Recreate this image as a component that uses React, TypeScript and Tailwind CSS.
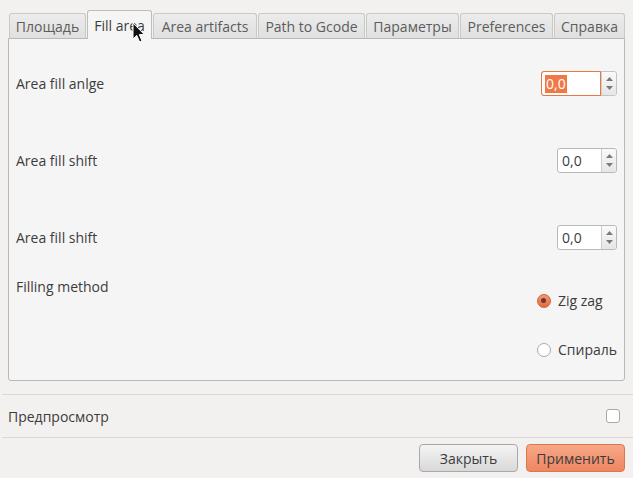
import * as React from "react"

const TABS = [
  { label: "Площадь", w: "w-[77px]" },
  { label: "Fill area", w: "w-[65px]", active: true },
  { label: "Area artifacts", w: "w-[104px]" },
  { label: "Path to Gcode", w: "w-[107px]" },
  { label: "Параметры", w: "w-[93px]" },
  { label: "Preferences", w: "w-[93px]" },
  { label: "Справка", w: "w-[71px]" },
]

function SpinArrows() {
  return (
    <div className="flex w-[15px] flex-col items-center justify-center gap-[5px] rounded-r-[3px] border-l border-[#cfcfcf] bg-gradient-to-b from-[#fafafa] to-[#e6e6e6]">
      <svg width="7" height="4" viewBox="0 0 7 4">
        <path d="M0 4 L3.5 0 L7 4 Z" fill="#7a7a7a" />
      </svg>
      <svg width="7" height="4" viewBox="0 0 7 4">
        <path d="M0 0 L3.5 4 L7 0 Z" fill="#7a7a7a" />
      </svg>
    </div>
  )
}

function SpinBox({ focused }: { focused?: boolean }) {
  if (focused) {
    return (
      <div className="flex h-[25px] w-[76px] rounded-[3px] border border-[#c4c4c4] bg-white">
        <div className="-my-px -ml-px flex flex-1 items-center rounded-l-[3px] border border-[#e9773f] pl-[3px]">
          <span className="bg-[#f07746] px-px leading-[18px] text-white">0,0</span>
        </div>
        <SpinArrows />
      </div>
    )
  }
  return (
    <div className="flex h-[25px] w-[60px] rounded-[3px] border border-[#b9b9b9] bg-white">
      <div className="flex flex-1 items-center pl-[4px]">0,0</div>
      <SpinArrows />
    </div>
  )
}

function Radio({ checked, label }: { checked?: boolean; label: string }) {
  return (
    <div className="flex items-center gap-[7px]">
      {checked ? (
        <span className="flex h-[14px] w-[14px] items-center justify-center rounded-full border border-[#c9633c] bg-gradient-to-b from-[#f39a76] to-[#e4683b]">
          <span className="h-[5px] w-[5px] rounded-full bg-[#6b3a28]" />
        </span>
      ) : (
        <span className="h-[14px] w-[14px] rounded-full border border-[#a9a9a9] bg-white" />
      )}
      <span>{label}</span>
    </div>
  )
}

function Cursor() {
  return (
    <svg
      className="pointer-events-none absolute left-[132px] top-[22px] z-20"
      width="14"
      height="22"
      viewBox="0 0 14 22"
    >
      <path
        d="M1 1 L1 17 L4.8 13.4 L7.6 20 L10 19 L7.3 12.6 L12.4 12.6 Z"
        fill="#111"
        stroke="#fff"
        strokeWidth="1"
        strokeLinejoin="round"
      />
    </svg>
  )
}

export default function App() {
  return (
    <div className="relative h-[478px] w-[633px] overflow-hidden bg-[#f2f1f0] font-['Open_Sans',sans-serif] text-[14px] text-[#3c3c3c]">
      <div className="flex items-end gap-[1px] pl-[9px] pt-[10px]">
        {TABS.map((t) =>
          t.active ? (
            <div
              key={t.label}
              className={`relative z-10 -mb-px flex h-[29px] ${t.w} items-center justify-center rounded-t-[3px] border border-b-0 border-[#bdbdbd] bg-[#f5f5f5] text-[#3c3c3c]`}
            >
              {t.label}
            </div>
          ) : (
            <div
              key={t.label}
              className={`flex h-[25px] ${t.w} items-center justify-center rounded-t-[3px] border border-b-0 border-[#c9c9c9] bg-gradient-to-b from-[#ececec] to-[#e0e0e0] text-[#5c5c5c]`}
            >
              {t.label}
            </div>
          )
        )}
      </div>

      <div className="mx-[8px] flex h-[343px] flex-col rounded-b-[3px] border border-[#b8b8b8] bg-[#f5f5f5] pl-[7px] pr-[7px] pt-[32px]">
        <div className="flex h-[25px] items-center justify-between">
          <span>Area fill anlge</span>
          <SpinBox focused />
        </div>
        <div className="mt-[52px] flex h-[25px] items-center justify-between">
          <span>Area fill shift</span>
          <SpinBox />
        </div>
        <div className="mt-[52px] flex h-[25px] items-center justify-between">
          <span>Area fill shift</span>
          <SpinBox />
        </div>
        <div className="mt-[27px] flex justify-between">
          <span className="leading-[20px]">Filling method</span>
          <div className="mt-[13px] flex flex-col gap-[28px]">
            <Radio checked label="Zig zag" />
            <Radio label="Спираль" />
          </div>
        </div>
      </div>

      <div className="ml-[2px] mt-[13px] h-px bg-[#dad9d7]" />
      <div className="flex h-[42px] items-center justify-between pl-[8px] pr-[13px]">
        <span>Предпросмотр</span>
        <span className="h-[14px] w-[14px] rounded-[3px] border border-[#a9a9a9] bg-white" />
      </div>
      <div className="ml-[2px] h-px bg-[#dad9d7]" />

      <div className="mt-[6px] flex justify-end gap-[8px] pr-[8px]">
        <button className="h-[28px] w-[99px] rounded-[4px] border border-[#a8a8a8] bg-gradient-to-b from-[#f4f4f4] to-[#d9d9d9] text-[#3c3c3c]">
          Закрыть
        </button>
        <button className="h-[28px] w-[99px] rounded-[4px] border border-[#d9774f] bg-gradient-to-b from-[#f7a888] to-[#ee8562] text-[#3c3c3c]">
          Применить
        </button>
      </div>

      <Cursor />
    </div>
  )
}
